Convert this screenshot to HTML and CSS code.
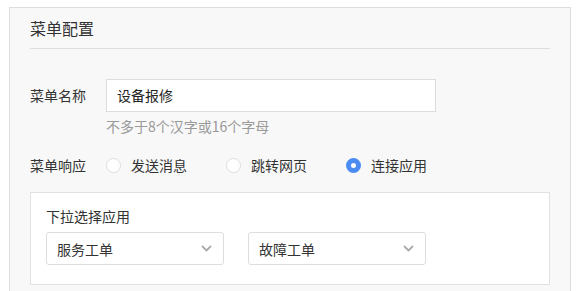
FILE: index.html
```html
<!DOCTYPE html>
<html lang="zh-CN">
<head>
<meta charset="utf-8">
<title>菜单配置</title>
<link rel="stylesheet" href="styles.css">
</head>
<body>
<div class="panel">
  <div class="panel-head">菜单配置</div>
  <div class="form-row name-row">
    <div class="label">菜单名称</div>
    <div class="field">
      <div class="input">设备报修</div>
      <div class="hint">不多于8个汉字或16个字母</div>
    </div>
  </div>
  <div class="form-row radio-row">
    <div class="label">菜单响应</div>
    <div class="radios">
      <div class="radio"><span class="dot"></span><span>发送消息</span></div>
      <div class="radio"><span class="dot"></span><span>跳转网页</span></div>
      <div class="radio"><span class="dot checked"></span><span>连接应用</span></div>
    </div>
  </div>
  <div class="sub-box">
    <div class="sub-title">下拉选择应用</div>
    <div class="selects">
      <div class="select"><span>服务工单</span>
        <svg class="chev" width="11" height="7" viewBox="0 0 11 7"><polyline points="1,1 5.5,5.5 10,1" fill="none" stroke="#aaaaaa" stroke-width="1.8"/></svg>
      </div>
      <div class="select"><span>故障工单</span>
        <svg class="chev" width="11" height="7" viewBox="0 0 11 7"><polyline points="1,1 5.5,5.5 10,1" fill="none" stroke="#aaaaaa" stroke-width="1.8"/></svg>
      </div>
    </div>
  </div>
</div>
</body>
</html>
```
FILE: styles.css
```css
html, body {
  margin: 0;
  padding: 0;
  background: #ffffff;
}
body {
  font-family: "Noto Sans CJK SC", "Noto Sans", sans-serif;
  font-size: 14px;
  color: #333333;
  overflow: hidden;
}
.panel {
  margin: 7px 0 0 9px;
  width: 520px;
  min-height: 300px;
  padding: 0 20px;
  background: #f8f8f8;
  border: 1px solid #dddddd;
}
.panel-head {
  font-size: 16px;
  line-height: 24px;
  padding-top: 8px;
  padding-bottom: 8px;
  border-bottom: 1px solid #dddddd;
  color: #333333;
}
.form-row {
  display: flex;
  align-items: flex-start;
}
.name-row {
  margin-top: 30px;
}
.label {
  width: 76px;
  flex: none;
  line-height: 33px;
  font-size: 14px;
}
.input {
  box-sizing: border-box;
  width: 330px;
  height: 33px;
  line-height: 31px;
  padding-left: 10px;
  background: #ffffff;
  border: 1px solid #dddddd;
  color: #222222;
}
.hint {
  margin-top: 4px;
  line-height: 20px;
  color: #999999;
}
.radio-row {
  margin-top: 19px;
}
.radio-row .label {
  line-height: 20px;
}
.radios {
  display: flex;
  align-items: center;
}
.radio {
  display: flex;
  align-items: center;
  gap: 10px;
  line-height: 20px;
  margin-right: 39px;
}
.dot {
  box-sizing: border-box;
  width: 15px;
  height: 15px;
  border-radius: 50%;
  background: #ffffff;
  border: 1px solid #dddddd;
}
.dot.checked {
  border: 5px solid #4a8cf2;
}
.sub-box {
  margin-top: 17px;
  background: #ffffff;
  border: 1px solid #e2e2e2;
  padding: 13px 15px 19px;
}
.sub-title {
  line-height: 20px;
}
.selects {
  display: flex;
  gap: 24px;
  margin-top: 6px;
}
.select {
  box-sizing: border-box;
  width: 178px;
  height: 33px;
  display: flex;
  align-items: center;
  justify-content: space-between;
  padding: 0 11px 0 10px;
  background: #ffffff;
  border: 1px solid #dddddd;
  border-radius: 3px;
}
.chev {
  display: block;
}
```
